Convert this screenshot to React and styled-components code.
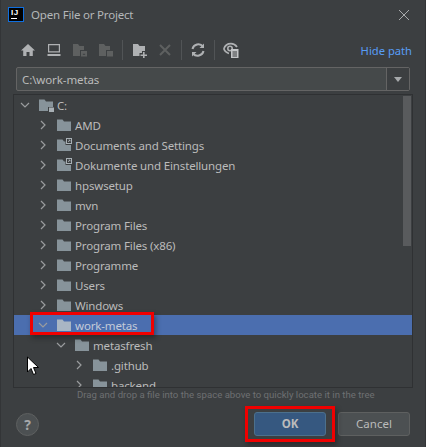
import React from "react";
import styled, { createGlobalStyle } from "styled-components";

const Global = createGlobalStyle`
  html, body { margin: 0; padding: 0; background: #3c3f41; }
  body { width: 426px; height: 447px; overflow: hidden; font-family: "Noto Sans", "Open Sans", sans-serif; }
`;

const Dialog = styled.div`
  position: relative;
  box-sizing: border-box;
  width: 426px;
  height: 447px;
  background: #3c3f41;
  border-left: 1px solid #333537;
  border-right: 1px solid #333537;
  display: flex;
  flex-direction: column;
  overflow: hidden;
`;

const TitleBar = styled.div`
  box-sizing: border-box;
  height: 30px;
  display: flex;
  align-items: center;
  padding: 0 15px 1px 7px;
  flex: none;
`;

const Logo = styled.div`
  box-sizing: border-box;
  width: 16px;
  height: 15px;
  border: 1px solid #0f6fe0;
  background: #000;
  color: #fff;
  font: 700 8px/8px "Liberation Sans", sans-serif;
  letter-spacing: 0.5px;
  padding: 1px 0 0 2px;
  flex: none;
  display: flex;
  flex-direction: column;
`;

const LogoBar = styled.span`
  display: block;
  width: 6px;
  height: 1px;
  margin-top: 1px;
  background: #fff;
`;

const Title = styled.div`
  margin-left: 7px;
  font-size: 11.5px;
  letter-spacing: -0.2px;
  color: #b4b7b9;
  flex: 1;
`;

const Close = styled.button`
  all: unset;
  display: flex;
  width: 12px;
  height: 12px;
`;

const Toolbar = styled.div`
  flex: none;
  box-sizing: border-box;
  height: 37px;
  display: flex;
  align-items: center;
  padding: 3px 13px 0 19px;
`;

const ToolIcon = styled.span`
  display: flex;
  width: 16px;
  height: 16px;
  margin-right: ${(p) => p.$gap ?? 10}px;
  flex: none;
`;

const Divider = styled.span`
  width: 1px;
  height: 20px;
  background: #515456;
  margin-right: ${(p) => p.$gap ?? 9}px;
  flex: none;
`;

const Spacer = styled.span`
  flex: 1;
`;

const HideLink = styled.a`
  font-size: 11.2px;
  color: #589df6;
`;

const PathField = styled.div`
  flex: none;
  box-sizing: border-box;
  margin: 0 15px;
  height: 24px;
  border: 1px solid #646464;
  border-radius: 2px;
  background: #45494a;
  display: flex;
  align-items: stretch;
`;

const PathInput = styled.div`
  flex: 1;
  padding-left: 5px;
  font-size: 11.5px;
  letter-spacing: -0.1px;
  line-height: 23px;
  color: #bbbbbb;
`;

const ComboButton = styled.div`
  width: 22px;
  background: #3c3f41;
  border-left: 1px solid #646464;
  display: flex;
  align-items: center;
  justify-content: center;
`;

const ComboArrow = styled.span`
  width: 0;
  height: 0;
  border-left: 4.5px solid transparent;
  border-right: 4.5px solid transparent;
  border-top: 5px solid #a6a9ab;
  margin-top: 1px;
`;

const Tree = styled.div`
  flex: none;
  box-sizing: border-box;
  position: relative;
  margin: 3px 12px 0 12px;
  height: 294px;
  border: 1px solid #2f3133;
  overflow: hidden;
`;

const Row = styled.div`
  box-sizing: border-box;
  height: 20px;
  display: flex;
  align-items: center;
  padding-left: ${(p) => 18 * p.$depth + 6}px;
  background: ${(p) => (p.$selected ? "#4b6eaf" : "transparent")};
  font-size: 11.5px;
  letter-spacing: -0.15px;
  color: ${(p) => (p.$selected ? "#c4cbd8" : "#bbbbbb")};
  white-space: nowrap;
`;

const Chevron = styled.span`
  display: flex;
  width: 10px;
  height: 10px;
  margin-right: 9px;
  flex: none;
`;

const FolderIcon = styled.span`
  display: flex;
  width: 15px;
  height: 14px;
  margin-right: 3px;
  flex: none;
`;

const Scrollbar = styled.div`
  position: absolute;
  top: 1px;
  right: 1px;
  width: 8px;
  height: 150px;
  background: #595b5d;
`;

const Hint = styled.div`
  flex: none;
  height: 14px;
  font-family: Roboto, sans-serif;
  font-size: 9.6px;
  line-height: 14px;
  color: #6e7072;
  padding-left: 76px;
  white-space: nowrap;
`;

const Footer = styled.div`
  flex: none;
  display: flex;
  align-items: center;
  padding: 0 15px;
  margin-top: 10px;
  height: 24px;
  gap: 12px;
`;

const Help = styled.div`
  box-sizing: border-box;
  width: 23px;
  height: 23px;
  border-radius: 50%;
  background: #4c5052;
  border: 1px solid #5e6060;
  color: #a6a8aa;
  font: 700 14px/21px "Noto Sans", sans-serif;
  text-align: center;
  margin-right: auto;
`;

const Button = styled.button`
  all: unset;
  box-sizing: border-box;
  width: 72px;
  height: 24px;
  border-radius: 3px;
  text-align: center;
  font-size: 11.5px;
  line-height: 22px;
  border: 1px solid ${(p) => (p.$primary ? "#4c708c" : "#5e6060")};
  background: ${(p) => (p.$primary ? "#365880" : "#4c5052")};
  color: #bbbbbb;
  font-weight: ${(p) => (p.$primary ? 700 : 400)};
`;

const Highlight = styled.div`
  position: absolute;
  box-sizing: border-box;
  left: ${(p) => p.$x}px;
  top: ${(p) => p.$y}px;
  width: ${(p) => p.$w}px;
  height: ${(p) => p.$h}px;
  border: 3px solid #f00000;
  box-shadow: 2px 3px 5px rgba(20, 20, 20, 0.45);
`;

const Cursor = styled.svg`
  position: absolute;
  left: 25px;
  top: 356px;
`;

const Icons = {
  home: (
    <svg width="16" height="16" viewBox="0 0 16 16"><path d="M8 2 1 8.5H3.2V14H6.5V10H9.5V14H12.8V8.5H15Z" fill="#afb1b3" /></svg>
  ),
  desktop: (
    <svg width="16" height="16" viewBox="0 0 16 16"><path d="M2 2h12v8.5H2zM3.2 3.2v6.1h9.6V3.2z" fill="#afb1b3" fillRule="evenodd" /><rect x="1.5" y="12" width="13" height="2" fill="#afb1b3" /></svg>
  ),
  project: (
    <svg width="16" height="16" viewBox="0 0 16 16"><path d="M1 2H6L7.5 4H12V8H8V14H1Z" fill="#5e6060" /><rect x="9" y="9" width="6" height="5.5" fill="#5e6060" /><rect x="10.8" y="11.8" width="2.4" height="1" fill="#3c3f41" /></svg>
  ),
  module: (
    <svg width="16" height="16" viewBox="0 0 16 16"><path d="M1 2H6L7.5 4H12V8H8V14H1Z" fill="#5e6060" /><rect x="9" y="9" width="6" height="5.5" fill="#5e6060" /></svg>
  ),
  newFolder: (
    <svg width="16" height="16" viewBox="0 0 16 16"><path d="M1 2H6L7.5 4H13V9H10V11H7.5V14H1Z" fill="#afb1b3" /><path d="M11 10h1.6v2.4H15V14h-2.4v2H11v-2H8.5v-1.6H11Z" fill="#afb1b3" /></svg>
  ),
  del: (
    <svg width="16" height="16" viewBox="0 0 16 16"><path d="M3 3 13 13M13 3 3 13" stroke="#5e6060" strokeWidth="2" fill="none" /></svg>
  ),
  refresh: (
    <svg width="16" height="16" viewBox="0 0 16 16" fill="none" stroke="#afb1b3" strokeWidth="2"><path d="M13 4.5A6 6 0 0 0 2.5 7" /><path d="M3 11.5A6 6 0 0 0 13.5 9" /><path d="M14 1.5V6H9.5Z" fill="#afb1b3" stroke="none" /><path d="M2 14.5V10H6.5Z" fill="#afb1b3" stroke="none" /></svg>
  ),
  eye: (
    <svg width="16" height="16" viewBox="0 0 16 16" fill="none"><path d="M0.8 7C2 3 5 1.6 8 1.6 10.5 1.6 12.5 2.8 14 5" stroke="#afb1b3" strokeWidth="1.7" /><path d="M0.8 7C2 9.5 3.5 11 6 11.5" stroke="#afb1b3" strokeWidth="1.7" /><circle cx="7" cy="6.5" r="2.2" stroke="#afb1b3" strokeWidth="1.6" /><rect x="8" y="7" width="7.5" height="9" fill="#c4c6c8" /><path d="M9.5 10h4.5M9.5 12h4.5M9.5 14h4.5" stroke="#3c3f41" /></svg>
  ),
};

const ChevronRight = () => (
  <svg width="10" height="10" viewBox="0 0 10 10"><path d="M3 1 7 5 3 9" fill="none" stroke="#9a9c9e" strokeWidth="1.2" /></svg>
);
const ChevronDown = () => (
  <svg width="10" height="10" viewBox="0 0 10 10"><path d="M1 3 5 7 9 3" fill="none" stroke="#9a9c9e" strokeWidth="1.2" /></svg>
);

const FOLDER = "#87939a";

const Folder = ({ kind, selected }) => (
  <svg width="15" height="14" viewBox="0 0 15 14">
    <path d="M0 1.5H5.5L7 3.5H14V13H0Z" fill={selected ? "#a9b6c4" : FOLDER} />
    {kind === "link" && (
      <>
        <rect x="8.5" y="0" width="6.5" height="7" fill="#3c3f41" />
        <rect x="9.5" y="0.5" width="5" height="5" fill="none" stroke="#a8b0b5" />
        <path d="M11 4 13 2M11.5 2H13V3.5" fill="none" stroke="#a8b0b5" strokeWidth="0.8" />
      </>
    )}
    {kind === "drive" && (
      <>
        <rect x="9" y="9" width="6" height="5" fill="#3c3f41" />
        <rect x="10" y="9.5" width="5" height="4.5" fill="#a8b0b5" />
      </>
    )}
  </svg>
);

const rows = [
  { d: 0, open: true, kind: "drive", name: "C:" },
  { d: 1, name: "AMD" },
  { d: 1, kind: "link", name: "Documents and Settings" },
  { d: 1, kind: "link", name: "Dokumente und Einstellungen" },
  { d: 1, name: "hpswsetup" },
  { d: 1, name: "mvn" },
  { d: 1, name: "Program Files" },
  { d: 1, name: "Program Files (x86)" },
  { d: 1, name: "Programme" },
  { d: 1, name: "Users" },
  { d: 1, name: "Windows" },
  { d: 1, open: true, selected: true, name: "work-metas" },
  { d: 2, open: true, name: "metasfresh" },
  { d: 3, name: ".github" },
  { d: 3, name: "backend" },
];

export default function App() {
  return (
    <Dialog>
      <Global />
      <TitleBar>
        <Logo>
          <span>IJ</span>
          <LogoBar />
        </Logo>
        <Title>Open File or Project</Title>
        <Close>
          <svg width="12" height="12" viewBox="0 0 12 12"><path d="M1 1 11 11M11 1 1 11" stroke="#a8aaac" strokeWidth="1" fill="none" /></svg>
        </Close>
      </TitleBar>
      <Toolbar>
        <ToolIcon $gap={10}>{Icons.home}</ToolIcon>
        <ToolIcon $gap={10}>{Icons.desktop}</ToolIcon>
        <ToolIcon $gap={10}>{Icons.project}</ToolIcon>
        <ToolIcon $gap={8}>{Icons.module}</ToolIcon>
        <Divider $gap={9} />
        <ToolIcon $gap={9}>{Icons.newFolder}</ToolIcon>
        <ToolIcon $gap={8}>{Icons.del}</ToolIcon>
        <Divider $gap={8} />
        <ToolIcon $gap={8}>{Icons.refresh}</ToolIcon>
        <Divider $gap={8} />
        <ToolIcon $gap={0}>{Icons.eye}</ToolIcon>
        <Spacer />
        <HideLink>Hide path</HideLink>
      </Toolbar>
      <PathField>
        <PathInput>C:\work-metas</PathInput>
        <ComboButton><ComboArrow /></ComboButton>
      </PathField>
      <Tree>
        {rows.map((r) => (
          <Row key={r.name} $depth={r.d} $selected={r.selected}>
            <Chevron>{r.open ? <ChevronDown /> : <ChevronRight />}</Chevron>
            <FolderIcon><Folder kind={r.kind} selected={r.selected} /></FolderIcon>
            {r.name}
          </Row>
        ))}
        <Scrollbar />
      </Tree>
      <Hint>Drag and drop a file into the space above to quickly locate it in the tree</Hint>
      <Footer>
        <Help>?</Help>
        <Button $primary>OK</Button>
        <Button>Cancel</Button>
      </Footer>
      <Highlight $x={29} $y={312} $w={124} $h={23} />
      <Highlight $x={244} $y={406} $w={90} $h={36} />
      <Cursor width="14" height="20" viewBox="0 0 14 20">
        <path d="M1.5 1V16L5 12.5 7.5 18.5 10 17.5 7.5 11.5H12.5Z" fill="#fff" stroke="#000" strokeWidth="1" />
      </Cursor>
    </Dialog>
  );
}
